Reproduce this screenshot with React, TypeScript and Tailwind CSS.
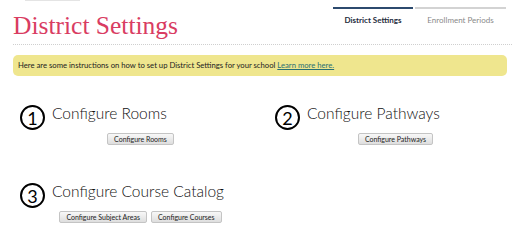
function StepBadge({ n }: { n: number }): JSX.Element {
  return (
    <span className="flex h-[25px] w-[25px] shrink-0 items-center justify-center rounded-full border-[2.5px] border-black pt-px text-[18px] leading-none text-black">
      {n}
    </span>
  );
}

function GrayButton({ label }: { label: string }): JSX.Element {
  return (
    <button
      type="button"
      className="h-[12px] rounded-[2px] border border-[#c4c4c4] bg-gradient-to-b from-[#f8f8f8] to-[#dedede] px-[6px] text-[7px] leading-none text-[#222]"
    >
      {label}
    </button>
  );
}

function Section({ n, title, buttons }: { n: number; title: string; buttons: string[] }): JSX.Element {
  return (
    <div className="w-[241px]">
      <div className="flex items-start gap-[7px]">
        <StepBadge n={n} />
        <h2 className="mt-[-2px] text-[15.5px] font-light leading-[20px] text-[#111]">{title}</h2>
      </div>
      <div className="mt-[3px] flex justify-center gap-[4px]">
        {buttons.map((b) => (
          <GrayButton key={b} label={b} />
        ))}
      </div>
    </div>
  );
}

export default function App(): JSX.Element {
  return (
    <div className="relative h-[231px] w-[512px] overflow-hidden bg-white font-['Lato',sans-serif]">
      <div className="absolute left-[25px] top-0 h-px w-[55px] bg-[#e4e4e4]" />

      <div className="ml-[13px] flex h-[45px] border-b border-dotted border-[#cfcfcf]">
        <h1 className="mt-[12px] font-['Liberation_Serif',serif] text-[25.5px] leading-[28px] text-[#d93c62]">
          District Settings
        </h1>
        <div className="ml-auto mr-[6px] mt-[7px] flex self-start">
          <div className="w-[80px] border-t-2 border-[#2c4a6e] pt-[6px] text-center text-[8px] font-bold leading-[10px] text-[#1f2d3d]">
            District Settings
          </div>
          <div className="ml-[2px] w-[91px] border-t-2 border-[#d3d3d3] pt-[6px] text-center text-[8px] leading-[10px] text-[#8a8a8a]">
            Enrollment Periods
          </div>
        </div>
      </div>

      <div className="ml-[13px] mr-[5px] mt-[10px] flex h-[21px] items-center rounded-[5px] bg-[#efe68e] px-[5px] text-[7.7px] text-[#222]">
        Here are some instructions on how to set up District Settings for your school&nbsp;
        <a href="#" className="text-[#2a6f73] underline">
          Learn more here.
        </a>
      </div>

      <div className="ml-[20px] mt-[29px] grid grid-cols-[241px_241px] gap-x-[14px] gap-y-[38px]">
        <Section n={1} title="Configure Rooms" buttons={["Configure Rooms"]} />
        <Section n={2} title="Configure Pathways" buttons={["Configure Pathways"]} />
        <Section n={3} title="Configure Course Catalog" buttons={["Configure Subject Areas", "Configure Courses"]} />
      </div>
    </div>
  );
}
